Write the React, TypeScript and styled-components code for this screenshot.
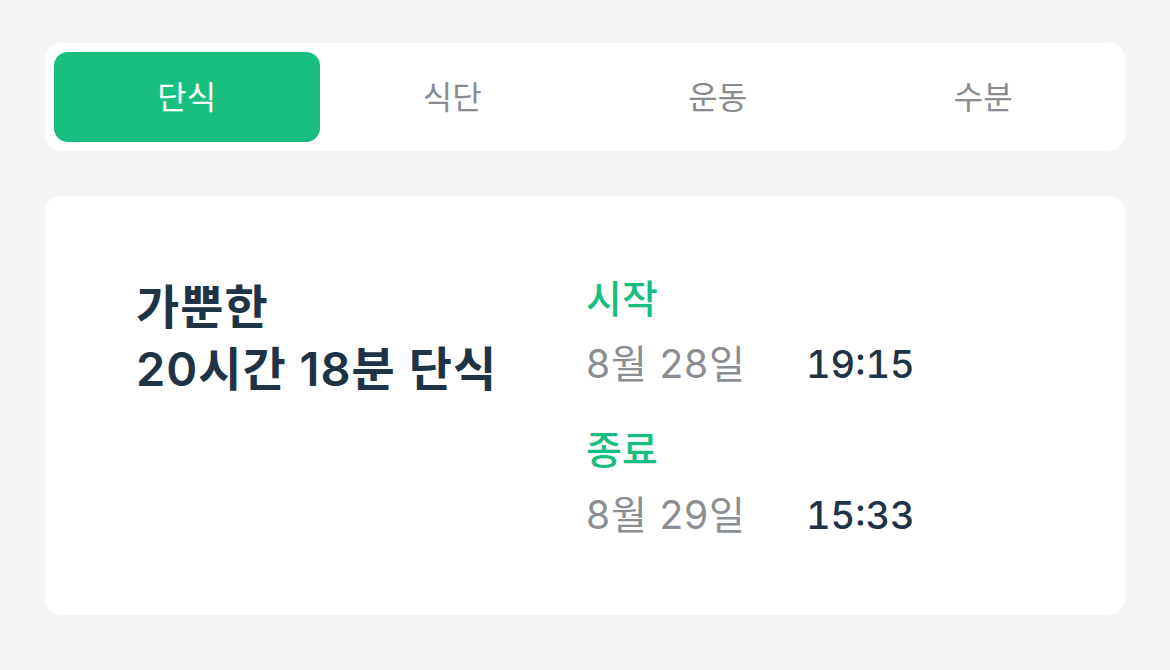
import styled, { createGlobalStyle } from 'styled-components';

const GlobalStyle = createGlobalStyle`
  * {
    box-sizing: border-box;
  }
  body {
    margin: 0;
    background-color: #f4f5f7;
    font-family: Inter, 'Noto Sans CJK KR', sans-serif;
  }
`;

const tabs = ['단식', '식단', '운동', '수분'];

const records = [
  { label: '시작', date: '8월 28일', time: '19:15' },
  { label: '종료', date: '8월 29일', time: '15:33' },
];

function App() {
  return (
    <>
      <GlobalStyle />
      <StyledRoot>
        <StyledTabBar>
          {tabs.map((tab, i) => (
            <StyledTab key={tab} $active={i === 0}>
              {tab}
            </StyledTab>
          ))}
        </StyledTabBar>
        <StyledCard>
          <StyledTitle>
            가뿐한
            <br />
            20시간 18분 단식
          </StyledTitle>
          <StyledRecords>
            {records.map((r) => (
              <StyledRecord key={r.label}>
                <StyledLabel>{r.label}</StyledLabel>
                <StyledRow>
                  <StyledDate>{r.date}</StyledDate>
                  <StyledTime>{r.time}</StyledTime>
                </StyledRow>
              </StyledRecord>
            ))}
          </StyledRecords>
        </StyledCard>
      </StyledRoot>
    </>
  );
}

const StyledRoot = styled.main`
  width: 1170px;
  height: 670px;
  padding: 43px 45px 0 45px;
  display: flex;
  flex-direction: column;
  gap: 45px;
`;

const StyledTabBar = styled.nav`
  height: 108px;
  padding: 9px;
  display: grid;
  grid-template-columns: repeat(4, 1fr);
  background-color: white;
  border-radius: 16px;
`;

const StyledTab = styled.button<{ $active: boolean }>`
  border: 0;
  border-radius: 14px;
  padding: 0 0 4px 0;
  font-family: inherit;
  font-size: 32px;
  font-weight: 400;
  background-color: ${({ $active }) => ($active ? '#18be7f' : 'transparent')};
  color: ${({ $active }) => ($active ? 'white' : '#888c90')};
`;

const StyledCard = styled.section`
  height: 419px;
  padding: 0 0 0 91px;
  display: flex;
  align-items: center;
  background-color: white;
  border-radius: 16px;
`;

const StyledTitle = styled.h2`
  width: 450px;
  margin: 0;
  align-self: flex-start;
  margin-top: 80px;
  font-size: 47px;
  font-weight: 600;
  line-height: 62px;
  letter-spacing: 1px;
  color: #1f3347;
`;

const StyledRecords = styled.div`
  display: flex;
  flex-direction: column;
  gap: 34px;
  margin-top: 2px;
`;

const StyledRecord = styled.div`
  display: flex;
  flex-direction: column;
  gap: 13px;
`;

const StyledLabel = styled.span`
  font-size: 39px;
  font-weight: 500;
  line-height: 52px;
  color: #18be7f;
`;

const StyledRow = styled.div`
  display: flex;
  line-height: 52px;
`;

const StyledDate = styled.span`
  width: 220px;
  font-size: 39px;
  font-weight: 400;
  letter-spacing: 0.8px;
  color: #8a8e92;
`;

const StyledTime = styled.span`
  font-size: 38px;
  font-weight: 500;
  font-variant-numeric: tabular-nums;
  color: #1f3347;
`;

export default App;
